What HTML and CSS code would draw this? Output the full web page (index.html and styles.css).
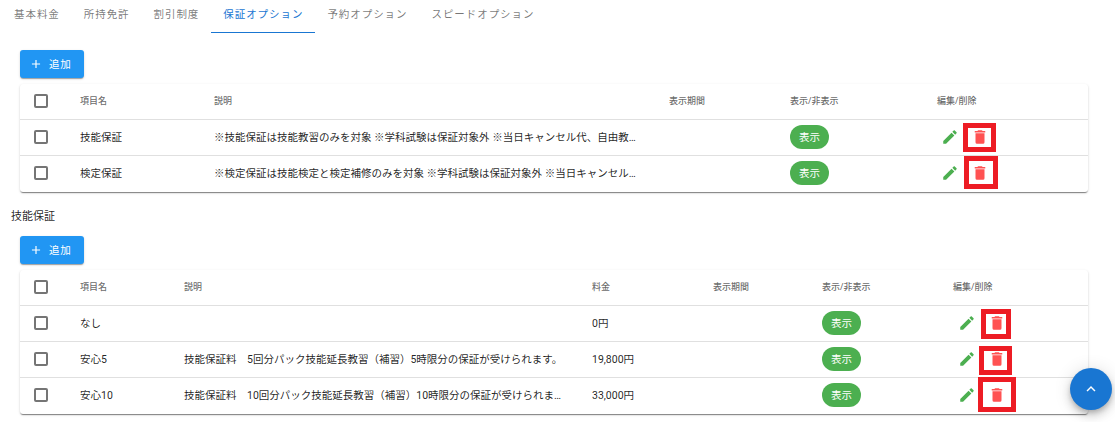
FILE: index.html
```html
<!DOCTYPE html>
<html lang="ja">
<head>
<meta charset="utf-8">
<title>保証オプション</title>
<link rel="stylesheet" href="styles.css">
</head>
<body>
<svg class="defs" width="0" height="0" aria-hidden="true">
  <symbol id="i-plus" viewBox="0 0 24 24"><path d="M19,13H13V19H11V13H5V11H11V5H13V11H19V13Z"/></symbol>
  <symbol id="i-pencil" viewBox="0 0 24 24"><path d="M20.71,7.04C21.1,6.65 21.1,6 20.71,5.63L18.37,3.29C18,2.9 17.35,2.9 16.96,3.29L15.12,5.12L18.87,8.87M3,17.25V21H6.75L17.81,9.93L14.06,6.18L3,17.25Z"/></symbol>
  <symbol id="i-delete" viewBox="0 0 24 24"><path d="M19,4H15.5L14.5,3H9.5L8.5,4H5V6H19M6,19A2,2 0 0,0 8,21H16A2,2 0 0,0 18,19V7H6V19Z"/></symbol>
  <symbol id="i-up" viewBox="0 0 24 24"><path d="M7.41,15.41L12,10.83L16.59,15.41L18,14L12,8L6,14L7.41,15.41Z"/></symbol>
</svg>
<nav class="tabs">
  <a class="tab">基本料金</a>
  <a class="tab">所持免許</a>
  <a class="tab">割引制度</a>
  <a class="tab tab-active">保証オプション</a>
  <a class="tab">予約オプション</a>
  <a class="tab">スピードオプション</a>
</nav>
<main class="page">
  <button class="add-btn first"><svg class="ic-plus"><use href="#i-plus"/></svg>追加</button>
  <div class="card">
    <table class="grid">
      <colgroup><col class="c-check"><col class="a-name"><col class="a-desc"><col class="a-period"><col class="a-show"><col></colgroup>
      <thead><tr><th><span class="check"></span></th><th>項目名</th><th>説明</th><th>表示期間</th><th>表示/非表示</th><th>編集/削除</th></tr></thead>
      <tbody>
        <tr><td><span class="check"></span></td><td>技能保証</td><td class="desc">※技能保証は技能教習のみを対象 ※学科試験は保証対象外 ※当日キャンセル代、自由教習代は保証対象外です。</td><td></td><td><span class="chip">表示</span></td><td><div class="actions"><svg class="ic-edit"><use href="#i-pencil"/></svg><svg class="ic-del"><use href="#i-delete"/></svg></div></td></tr>
        <tr><td><span class="check"></span></td><td>検定保証</td><td class="desc">※検定保証は技能検定と検定補修のみを対象 ※学科試験は保証対象外 ※当日キャンセル代、自由教習代は保証対象外です。</td><td></td><td><span class="chip">表示</span></td><td><div class="actions"><svg class="ic-edit"><use href="#i-pencil"/></svg><svg class="ic-del"><use href="#i-delete"/></svg></div></td></tr>
      </tbody>
    </table>
  </div>
  <h2 class="label">技能保証</h2>
  <button class="add-btn"><svg class="ic-plus"><use href="#i-plus"/></svg>追加</button>
  <div class="card">
    <table class="grid grid-b">
      <colgroup><col class="c-check"><col class="b-name"><col class="b-desc"><col class="b-price"><col class="b-period"><col class="b-show"><col></colgroup>
      <thead><tr><th><span class="check"></span></th><th>項目名</th><th>説明</th><th>料金</th><th>表示期間</th><th>表示/非表示</th><th>編集/削除</th></tr></thead>
      <tbody>
        <tr><td><span class="check"></span></td><td>なし</td><td class="desc"></td><td>0円</td><td></td><td><span class="chip">表示</span></td><td><div class="actions"><svg class="ic-edit"><use href="#i-pencil"/></svg><svg class="ic-del"><use href="#i-delete"/></svg></div></td></tr>
        <tr><td><span class="check"></span></td><td>安心5</td><td class="desc">技能保証料　5回分パック技能延長教習（補習）5時限分の保証が受けられます。</td><td>19,800円</td><td></td><td><span class="chip">表示</span></td><td><div class="actions"><svg class="ic-edit"><use href="#i-pencil"/></svg><svg class="ic-del"><use href="#i-delete"/></svg></div></td></tr>
        <tr><td><span class="check"></span></td><td>安心10</td><td class="desc">技能保証料　10回分パック技能延長教習（補習）10時限分の保証が受けられます。</td><td>33,000円</td><td></td><td><span class="chip">表示</span></td><td><div class="actions"><svg class="ic-edit"><use href="#i-pencil"/></svg><svg class="ic-del"><use href="#i-delete"/></svg></div></td></tr>
      </tbody>
    </table>
  </div>
</main>
<span class="mark mark-1"></span>
<span class="mark mark-2"></span>
<span class="mark mark-3"></span>
<span class="mark mark-4"></span>
<span class="mark mark-5"></span>
<button class="fab" aria-label="上へ"><svg class="ic-up"><use href="#i-up"/></svg></button>
</body>
</html>
```
FILE: styles.css
```css
* { box-sizing: border-box; }
html, body { margin: 0; padding: 0; background: #fff; }
body {
  width: 1115px;
  height: 422px;
  overflow: hidden;
  position: relative;
  font-family: Roboto, "Noto Sans CJK JP", sans-serif;
  font-size: 10.5px;
  color: rgba(0, 0, 0, .87);
}
.defs { position: absolute; }

.tabs { display: flex; height: 33px; padding-left: 2px; }
.tab {
  display: flex;
  align-items: center;
  padding: 0 12px 7px;
  font-size: 10.5px;
  letter-spacing: .94px;
  color: rgba(0, 0, 0, .54);
  white-space: nowrap;
}
.tab-active { color: #1976d2; border-bottom: 1.5px solid #1976d2; padding-bottom: 5.5px; }

.page { padding: 0 27px 0 11px; }
.add-btn {
  display: flex;
  align-items: center;
  width: 64px;
  height: 28px;
  margin: 0 0 6px 9px;
  padding: 0 0 1px 9px;
  border: 0;
  border-radius: 3px;
  background: #2196f3;
  color: #fff;
  font: inherit;
  font-size: 10.5px;
  letter-spacing: .8px;
  box-shadow: 0 2px 1px -1px rgba(0,0,0,.2), 0 1px 1px 0 rgba(0,0,0,.14), 0 1px 3px 0 rgba(0,0,0,.12);
}
.add-btn.first { margin-top: 17px; }
.ic-plus { width: 14px; height: 14px; margin-right: 6px; fill: #fff; }

.card {
  margin-left: 9px;
  border-radius: 3px;
  background: #fff;
  box-shadow: 0 2px 1px -1px rgba(0,0,0,.3), 0 1px 1px 0 rgba(0,0,0,.2), 0 1px 3px 0 rgba(0,0,0,.12);
}
.grid { width: 1068px; table-layout: fixed; border-collapse: separate; border-spacing: 0; }
.c-check { width: 44px; }
.a-name { width: 134px; }
.a-desc { width: 455px; }
.a-period { width: 121px; }
.a-show { width: 147px; }
.b-name { width: 104px; }
.b-desc { width: 408px; }
.b-price { width: 121px; }
.b-period { width: 109px; }
.b-show { width: 131px; }

th, td {
  height: 36px;
  padding: 0 16px 2px;
  text-align: left;
  border-bottom: 1px solid rgba(0, 0, 0, .12);
  white-space: nowrap;
}
tbody tr:last-child td { border-bottom: 0; padding-bottom: 3px; }
th { font-size: 9px; font-weight: 500; color: rgba(0, 0, 0, .6); }
th:first-child, td:first-child { padding-left: 14px; padding-right: 0; }
.desc { overflow: hidden; text-overflow: ellipsis; padding-right: 12px; }

.check {
  display: block;
  width: 14px;
  height: 14px;
  border: 2px solid #757575;
  border-radius: 2px;
}
.chip {
  display: inline-flex;
  align-items: center;
  justify-content: center;
  width: 39px;
  height: 24px;
  border-radius: 12px;
  background: #4caf50;
  color: #fff;
  vertical-align: middle;
}
.actions { display: flex; align-items: center; gap: 12px; padding-left: 4px; }
.grid-b .actions { padding-left: 5px; }
.ic-edit, .ic-del { width: 18px; height: 18px; flex: none; }
.ic-edit { fill: #4caf50; }
.ic-del { fill: #ff5252; }

.label {
  margin: 17px 0 11px;
  height: 16px;
  font-size: 11px;
  line-height: 16px;
  font-weight: 400;
}

.mark { position: absolute; border: 5px solid #ed1c24; }
.mark-1 { left: 963px; top: 123px; width: 33px; height: 29px; }
.mark-2 { left: 964px; top: 156px; width: 34px; height: 33px; }
.mark-3 { left: 981px; top: 309px; width: 30px; height: 30px; }
.mark-4 { left: 979px; top: 346px; width: 33px; height: 29px; }
.mark-5 { left: 978px; top: 377px; width: 38px; height: 35px; }

.fab {
  position: absolute;
  left: 1070px;
  top: 368px;
  width: 42px;
  height: 42px;
  padding: 0;
  display: flex;
  align-items: center;
  justify-content: center;
  border: 0;
  border-radius: 50%;
  background: #1976d2;
  box-shadow: 0 3px 5px -1px rgba(0,0,0,.2), 0 6px 10px 0 rgba(0,0,0,.14), 0 1px 18px 0 rgba(0,0,0,.12);
}
.ic-up { width: 18px; height: 18px; fill: #fff; }
```
